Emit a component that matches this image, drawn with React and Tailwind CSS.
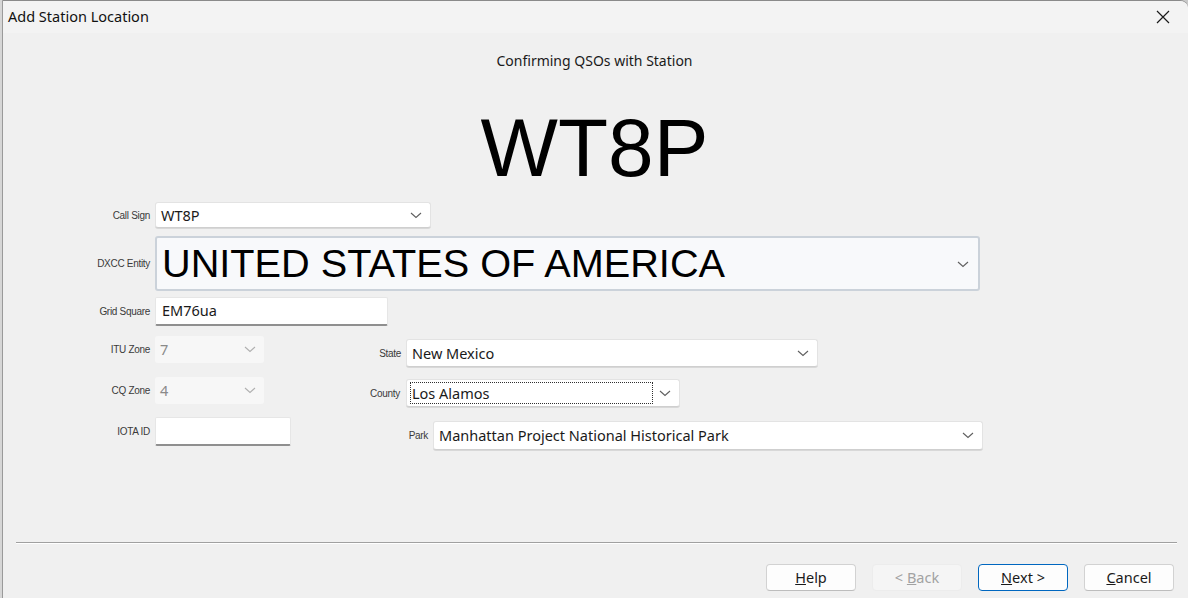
import React from "react";

const Chevron = ({ color = "#5f5f5f" }) => (
  <svg width="12" height="7" viewBox="0 0 12 7" fill="none">
    <path d="M1 1 L6 5.5 L11 1" stroke={color} strokeWidth="1.1" />
  </svg>
);

const Label = ({ children, className = "" }) => (
  <div
    className={
      "text-[10px] text-[#3a3a3a] tracking-[-0.3px] font-['Liberation_Sans',Arial,sans-serif] " +
      className
    }
  >
    {children}
  </div>
);

const Combo = ({ value, className = "", disabled = false, focus = false }) => (
  <div
    className={
      "flex items-center rounded-[3px] " +
      (disabled
        ? "bg-[#f7f7f7] text-[#8a8a8a] "
        : "bg-white text-[#1a1a1a] border border-[#e3e3e3] border-b-[#cfcfcf] shadow-[0_1px_0_#d8d8d8] ") +
      className
    }
  >
    <div className="flex-1 min-w-0 pl-[4px] pr-[2px] h-full flex items-center">
      <div
        className={
          "w-full h-[calc(100%-6px)] flex items-center pl-[1px] " +
          (focus ? "outline outline-1 outline-dotted outline-[#303030]" : "")
        }
      >
        <span className="text-[14.5px] font-['Noto_Sans',sans-serif] leading-none whitespace-nowrap">
          {value}
        </span>
      </div>
    </div>
    <div className="w-[22px] flex items-center justify-center shrink-0 mr-[3px]">
      <Chevron color={disabled ? "#b0b0b0" : "#5f5f5f"} />
    </div>
  </div>
);

const Input = ({ value, className = "" }) => (
  <div
    className={
      "bg-white border border-[#e6e6e6] border-b-[2px] border-b-[#8f8f8f] rounded-[2px] flex items-center pl-[6px] text-[14.5px] text-[#1a1a1a] font-['Noto_Sans',sans-serif] " +
      className
    }
  >
    {value}
  </div>
);

const Button = ({ children, variant = "normal" }) => {
  const base =
    "w-[90px] h-[27px] rounded-[4px] flex items-center justify-center text-[14.5px] font-['Noto_Sans',sans-serif] ";
  const v =
    variant === "primary"
      ? "bg-[#fdfdfd] border border-[#0067c0] text-[#1a1a1a]"
      : variant === "disabled"
      ? "bg-[#f5f5f5] border border-[#ececec] text-[#a2a2a2]"
      : "bg-[#fdfdfd] border border-[#d2d2d2] border-b-[#bdbdbd] text-[#1a1a1a]";
  return <div className={base + v}>{children}</div>;
};

export default function App() {
  return (
    <div className="w-[1188px] h-[598px] overflow-hidden bg-[#c9c9c9] flex font-['Noto_Sans',sans-serif]">
      <div className="w-[2px] bg-[#d6d6d6]" />
      <div className="flex-1 flex flex-col bg-[#f0f0f0] border-l border-[#9a9a9a] border-t border-t-[#8a8a8a] rounded-tr-[8px] overflow-hidden">
        {/* Title bar */}
        <div className="h-[32px] bg-[#f3f3f3] flex items-center justify-between shrink-0">
          <div className="pl-[5px] text-[14.5px] text-[#111]">Add Station Location</div>
          <div className="w-[46px] h-[32px] flex items-center justify-center mr-[2px]">
            <svg width="14" height="14" viewBox="0 0 14 14">
              <path d="M1 1 L13 13 M13 1 L1 13" stroke="#1a1a1a" strokeWidth="1.2" />
            </svg>
          </div>
        </div>

        {/* Header */}
        <div className="flex flex-col items-center">
          <div className="mt-[18px] h-[20px] leading-[20px] text-[14px] text-[#1a1a1a] pr-[2px]">
            Confirming QSOs with Station
          </div>
          <div className="mt-[22px] h-[110px] leading-[110px] text-[82px] text-black font-['Liberation_Sans',Arial,sans-serif] pr-[2px]">
            WT8P
          </div>
        </div>

        {/* Form */}
        <div className="flex">
          <div className="flex flex-col w-[1000px]">
            <div className="flex items-center mt-[-1px]">
              <Label className="w-[147px] text-right">Call Sign</Label>
              <Combo value="WT8P" className="ml-[5px] w-[276px] h-[26px]" />
            </div>
            <div className="flex items-center mt-[8px]">
              <Label className="w-[147px] text-right">DXCC Entity</Label>
              <div className="ml-[5px] w-[825px] h-[55px] rounded-[3px] bg-[#f8f9fb] border-2 border-[#cbd2da] flex items-center">
                <div className="flex-1 pl-[5px] text-[39.7px] leading-none text-black font-['Liberation_Sans',Arial,sans-serif] whitespace-nowrap">
                  UNITED STATES OF AMERICA
                </div>
                <div className="w-[22px] flex items-center justify-center mr-[4px] mt-[2px]">
                  <Chevron />
                </div>
              </div>
            </div>
            <div className="flex items-center mt-[6px]">
              <Label className="w-[147px] text-right">Grid Square</Label>
              <Input value="EM76ua" className="ml-[5px] w-[233px] h-[29px]" />
            </div>

            <div className="flex">
              <div className="flex flex-col">
                <div className="flex items-center mt-[10px]">
                  <Label className="w-[147px] text-right">ITU Zone</Label>
                  <Combo value="7" disabled className="ml-[5px] w-[109px] h-[27px]" />
                </div>
                <div className="flex items-center mt-[14px]">
                  <Label className="w-[147px] text-right">CQ Zone</Label>
                  <Combo value="4" disabled className="ml-[5px] w-[109px] h-[27px]" />
                </div>
                <div className="flex items-center mt-[13px]">
                  <Label className="w-[147px] text-right">IOTA ID</Label>
                  <Input value="" className="ml-[5px] w-[136px] h-[29px]" />
                </div>
              </div>

              <div className="flex flex-col">
                <div className="flex items-center mt-[13px]">
                  <Label className="w-[110px] text-right">State</Label>
                  <Combo value="New Mexico" className="ml-[5px] w-[412px] h-[28px]" />
                </div>
                <div className="flex items-center mt-[12px]">
                  <Label className="w-[109px] text-right">County</Label>
                  <Combo value="Los Alamos" focus className="ml-[6px] w-[274px] h-[28px]" />
                </div>
                <div className="flex items-center mt-[14px]">
                  <Label className="w-[137px] text-right">Park</Label>
                  <Combo
                    value="Manhattan Project National Historical Park"
                    className="ml-[5px] w-[550px] h-[29px]"
                  />
                </div>
              </div>
            </div>
          </div>
        </div>

        {/* Separator */}
        <div className="mt-auto ml-[13px] mr-[11px] h-[2px] border-t border-[#a0a0a0] border-b border-b-white" />

        {/* Buttons */}
        <div className="flex justify-end gap-[16px] pr-[14px] pt-[20px] pb-[7px]">
          <Button>
            <span><u>H</u>elp</span>
          </Button>
          <Button variant="disabled">
            <span>&lt; <u>B</u>ack</span>
          </Button>
          <Button variant="primary">
            <span><u>N</u>ext &gt;</span>
          </Button>
          <Button>
            <span><u>C</u>ancel</span>
          </Button>
        </div>
      </div>
    </div>
  );
}
